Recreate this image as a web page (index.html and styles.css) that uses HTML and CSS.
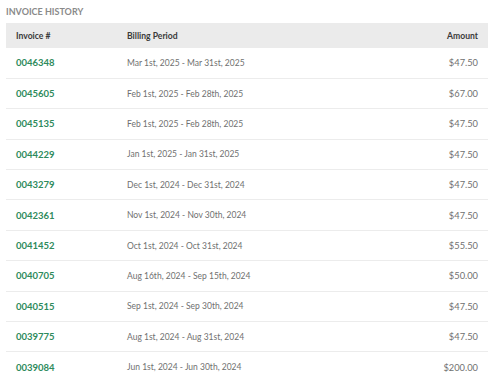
FILE: index.html
```html
<!DOCTYPE html>
<html lang="en">
<head>
    <meta charset="UTF-8">
    <meta name="viewport" content="width=device-width, initial-scale=1.0">
    <title>Invoice History</title>
    <link rel="stylesheet" href="styles.css">
</head>
<body>
    <div class="container">
        <!-- Title section -->
        <div class="title">Invoice History</div>
        <table class="invoices">
            <thead>
                <tr>
                    <th class="col-invoice">Invoice #</th>
                    <th class="col-period">Billing Period</th>
                    <th class="col-amount">Amount</th>
                </tr>
            </thead>
            <tbody>
                <tr>
                    <td><a href="#">0046348</a></td>
                    <td class="col-period">Mar 1st, 2025 - Mar 31st, 2025</td>
                    <td class="col-amount">$47.50</td>
                </tr>
                <tr>
                    <td><a href="#">0045605</a></td>
                    <td class="col-period">Feb 1st, 2025 - Feb 28th, 2025</td>
                    <td class="col-amount">$67.00</td>
                </tr>
                <tr>
                    <td><a href="#">0045135</a></td>
                    <td class="col-period">Feb 1st, 2025 - Feb 28th, 2025</td>
                    <td class="col-amount">$47.50</td>
                </tr>
                <tr>
                    <td><a href="#">0044229</a></td>
                    <td class="col-period">Jan 1st, 2025 - Jan 31st, 2025</td>
                    <td class="col-amount">$47.50</td>
                </tr>
                <tr>
                    <td><a href="#">0043279</a></td>
                    <td class="col-period">Dec 1st, 2024 - Dec 31st, 2024</td>
                    <td class="col-amount">$47.50</td>
                </tr>
                <tr>
                    <td><a href="#">0042361</a></td>
                    <td class="col-period">Nov 1st, 2024 - Nov 30th, 2024</td>
                    <td class="col-amount">$47.50</td>
                </tr>
                <tr>
                    <td><a href="#">0041452</a></td>
                    <td class="col-period">Oct 1st, 2024 - Oct 31st, 2024</td>
                    <td class="col-amount">$55.50</td>
                </tr>
                <tr>
                    <td><a href="#">0040705</a></td>
                    <td class="col-period">Aug 16th, 2024 - Sep 15th, 2024</td>
                    <td class="col-amount">$50.00</td>
                </tr>
                <tr>
                    <td><a href="#">0040515</a></td>
                    <td class="col-period">Sep 1st, 2024 - Sep 30th, 2024</td>
                    <td class="col-amount">$47.50</td>
                </tr>
                <tr>
                    <td><a href="#">0039775</a></td>
                    <td class="col-period">Aug 1st, 2024 - Aug 31st, 2024</td>
                    <td class="col-amount">$47.50</td>
                </tr>
                <tr>
                    <td><a href="#">0039084</a></td>
                    <td class="col-period">Jun 1st, 2024 - Jun 30th, 2024</td>
                    <td class="col-amount">$200.00</td>
                </tr>
            </tbody>
        </table>
    </div>
</body>
</html>
```

FILE: styles.css
```css
/* Reset and Base Styles */
* {
    margin: 0;
    padding: 0;
    box-sizing: border-box;
    font-family: 'Lato', 'Noto Sans', sans-serif;
}

body {
    background: #fff;
}

.container {
    padding: 6px 7px 0 6px;
}

.title {
    font-size: 9px;
    font-weight: 700;
    color: #8a8a8a;
    text-transform: uppercase;
    line-height: 12px;
    margin-bottom: 5px;
}

.invoices {
    width: 100%;
    border-collapse: collapse;
    font-size: 9.3px;
}

.invoices th {
    height: 25px;
    background: #ebebeb;
    color: #3a3a3a;
    font-size: 8.6px;
    font-weight: 700;
    text-align: left;
    padding: 0 10px;
}

.invoices td {
    height: 30.4px;
    padding: 0 10px;
    color: #707070;
    border-bottom: 1px solid #ececec;
}

.invoices .col-invoice {
    width: 111px;
}

.invoices td.col-period {
    font-size: 8.5px;
}

.invoices .col-amount {
    text-align: right;
}

.invoices td a {
    color: #2e8a5c;
    font-size: 9.5px;
    font-weight: 700;
    text-decoration: none;
}
```
